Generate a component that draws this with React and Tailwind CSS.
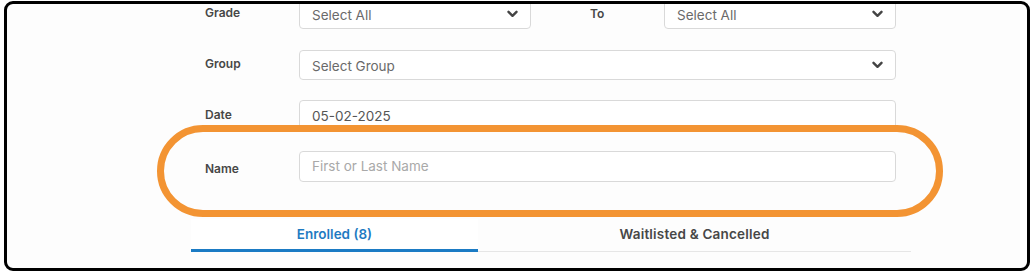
import React from "react";

const Chevron = () => (
  <svg width="11" height="8" viewBox="0 0 11 8" className="shrink-0">
    <path d="M1.5 1.8 L5.5 5.8 L9.5 1.8" fill="none" stroke="#444" strokeWidth="2.4" strokeLinecap="round" strokeLinejoin="round" />
  </svg>
);

const Select = ({ text, className = "" }) => (
  <div className={`h-[30px] flex items-center justify-between pl-[12px] pr-[12px] bg-white border border-[#d9d9d9] rounded-[4px] ${className}`}>
    <span className="text-[13.5px] text-[#6a6a6a] pt-[2px]">{text}</span>
    <Chevron />
  </div>
);

const Label = ({ children, className = "" }) => (
  <div className={`text-[12px] font-semibold text-[#474747] ${className}`}>{children}</div>
);

export default function App() {
  return (
    <div className="w-[1034px] h-[274px] bg-white pt-px pl-[4px] pr-[4px] pb-[3px]" style={{ fontFamily: "Inter, 'Open Sans', sans-serif" }}>
      <div className="relative h-full border-[3px] border-black rounded-[9px] bg-[#fdfdfd] overflow-hidden">
        <div className="ml-[184px] w-[720px] mt-[-5px]">
          <div className="pl-[14px] pr-[15px]">
            <div className="flex items-center h-[30px]">
              <Label className="w-[94px] pb-[3px]">Grade</Label>
              <Select text="Select All" className="w-[232px]" />
              <Label className="w-[133px] pl-[59px]">To</Label>
              <Select text="Select All" className="flex-1" />
            </div>
            <div className="flex items-center h-[30px] mt-[21px]">
              <Label className="w-[94px] pb-[2px]">Group</Label>
              <Select text="Select Group" className="flex-1" />
            </div>
            <div className="flex items-center h-[30px] mt-[20px]">
              <Label className="w-[94px]">Date</Label>
              <div className="flex-1 h-[30px] flex items-center pl-[12px] pt-[2px] bg-white border border-[#d9d9d9] rounded-[4px] text-[13.5px] text-[#555]">05-02-2025</div>
            </div>
            <div className="flex items-center h-[31px] mt-[21px]">
              <Label className="w-[94px] pt-[5px]">Name</Label>
              <div className="flex-1 h-[31px] flex items-center pl-[12px] bg-white border border-[#d9d9d9] rounded-[4px] text-[13.5px] text-[#a9a9a9]">First or Last Name</div>
            </div>
          </div>
          <div className="flex mt-[37px] h-[33px] border-b border-[#e6e6e6]">
            <div className="w-[287px] flex items-center justify-center bg-white border-b-[3px] border-[#1b7bc4] mb-[-1px] text-[13.5px] font-semibold text-[#1f7bc2]">Enrolled (8)</div>
            <div className="flex-1 flex items-center justify-center text-[13.5px] font-semibold text-[#474747] pb-[2px] tracking-[0.2px]">Waitlisted &amp; Cancelled</div>
          </div>
        </div>
        <div className="absolute left-[150px] top-[121px] w-[786px] h-[92px] rounded-full border-[7px] border-[#f39433]" />
      </div>
    </div>
  );
}
